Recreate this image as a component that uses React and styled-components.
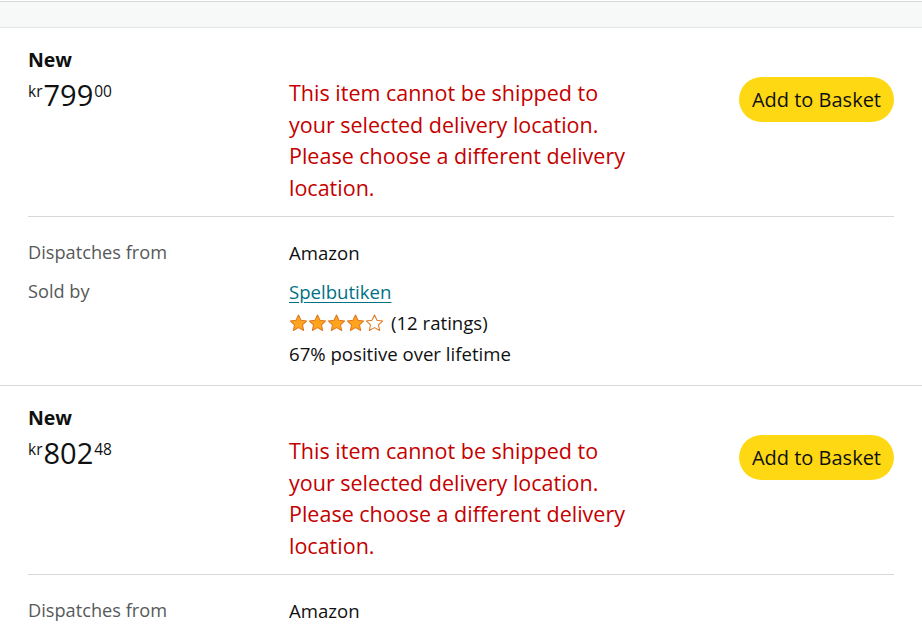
import React from "react";
import styled, { createGlobalStyle } from "styled-components";

const Global = createGlobalStyle`
  html, body { margin: 0; padding: 0; background: #fff; }
  body { font-family: "Open Sans", "Noto Sans", sans-serif; color: #0f1111; }
`;

const Page = styled.div`
  width: 922px;
  overflow: hidden;
`;

const TopBand = styled.div`
  height: 25px;
  margin-top: 1px;
  background: #f7f8f8;
  border-top: 1px solid #d5d9d9;
  border-bottom: 1px solid #e3e6e6;
`;

const Offer = styled.section`
  border-bottom: 1px solid #d5d9d9;
`;

const OfferInner = styled.div`
  padding: 0 28px 0 28px;
`;

const Head = styled.div`
  display: grid;
  grid-template-columns: 261px 1fr auto;
  grid-template-rows: auto auto;
  padding: 20px 0 13px;
  border-bottom: 1px solid #d5d9d9;
`;

const Condition = styled.div`
  grid-column: 1 / 2;
  font-size: 19.5px;
  font-weight: 700;
  line-height: 24px;
  margin-bottom: 5px;
`;

const Price = styled.div`
  grid-column: 1;
  grid-row: 2;
  display: flex;
  align-items: flex-start;
  line-height: 32px;
  padding-top: 1px;
`;

const Sup = styled.span`
  font-size: 15.5px;
  line-height: 15px;
  margin-top: 6px;
`;

const Whole = styled.span`
  font-size: 29px;
  line-height: 34px;
  margin: 0 1px;
`;

const Message = styled.div`
  grid-column: 2;
  grid-row: 2;
  width: 345px;
  color: #c40000;
  font-size: 21.5px;
  line-height: 31.5px;
`;

const BasketButton = styled.button`
  grid-column: 3;
  grid-row: 2;
  align-self: start;
  height: 45px;
  padding: 0 13px;
  border: none;
  border-radius: 23px;
  background: #ffd814;
  color: #0f1111;
  font-family: inherit;
  font-size: 20px;
  cursor: pointer;
`;

const Details = styled.div`
  display: grid;
  grid-template-columns: 261px 1fr;
  row-gap: 8px;
  padding: 20px 0 16px;
`;

const Label = styled.div`
  color: #565959;
  font-size: 18.2px;
  line-height: 31px;
`;

const Value = styled.div`
  font-size: 18.6px;
  line-height: 31px;
`;

const SellerLink = styled.a`
  color: #007185;
  text-decoration: underline;
  text-underline-offset: 3px;
  font-size: 18.6px;
  line-height: 31px;
  display: block;
  width: fit-content;
`;

const RatingRow = styled.div`
  display: flex;
  align-items: center;
  gap: 7px;
  font-size: 18.6px;
  line-height: 31px;
`;

const Stars = styled.span`
  display: inline-flex;
`;

const Star = ({ filled }) => (
  <svg width="19" height="18" viewBox="0 0 24 23">
    <path
      d="M12 1.2l3.2 6.7 7.3.9-5.4 5 1.5 7.2L12 17.4l-6.6 3.6 1.5-7.2-5.4-5 7.3-.9z"
      fill={filled ? "#ffa41c" : "#fff"}
      stroke="#de7921"
      strokeWidth="1.3"
      strokeLinejoin="round"
    />
  </svg>
);

const offers = [
  { whole: "799", fraction: "00", full: true },
  { whole: "802", fraction: "48", full: false },
];

function OfferBlock({ whole, fraction, full }) {
  return (
    <Offer>
      <OfferInner>
        <Head>
          <Condition>New</Condition>
          <Price>
            <Sup>kr</Sup>
            <Whole>{whole}</Whole>
            <Sup>{fraction}</Sup>
          </Price>
          <Message>
            This item cannot be shipped to your selected delivery location.
            Please choose a different delivery location.
          </Message>
          <BasketButton>Add to Basket</BasketButton>
        </Head>
        <Details>
          <Label>Dispatches from</Label>
          <Value>Amazon</Value>
          {full && (
            <>
              <Label>Sold by</Label>
              <div>
                <SellerLink href="#">Spelbutiken</SellerLink>
                <RatingRow>
                  <Stars>
                    {[1, 2, 3, 4, 5].map((i) => (
                      <Star key={i} filled={i <= 4} />
                    ))}
                  </Stars>
                  <span>(12 ratings)</span>
                </RatingRow>
                <Value>67% positive over lifetime</Value>
              </div>
            </>
          )}
        </Details>
      </OfferInner>
    </Offer>
  );
}

export default function App() {
  return (
    <Page>
      <Global />
      <TopBand />
      {offers.map((o, i) => (
        <OfferBlock key={i} {...o} />
      ))}
    </Page>
  );
}
